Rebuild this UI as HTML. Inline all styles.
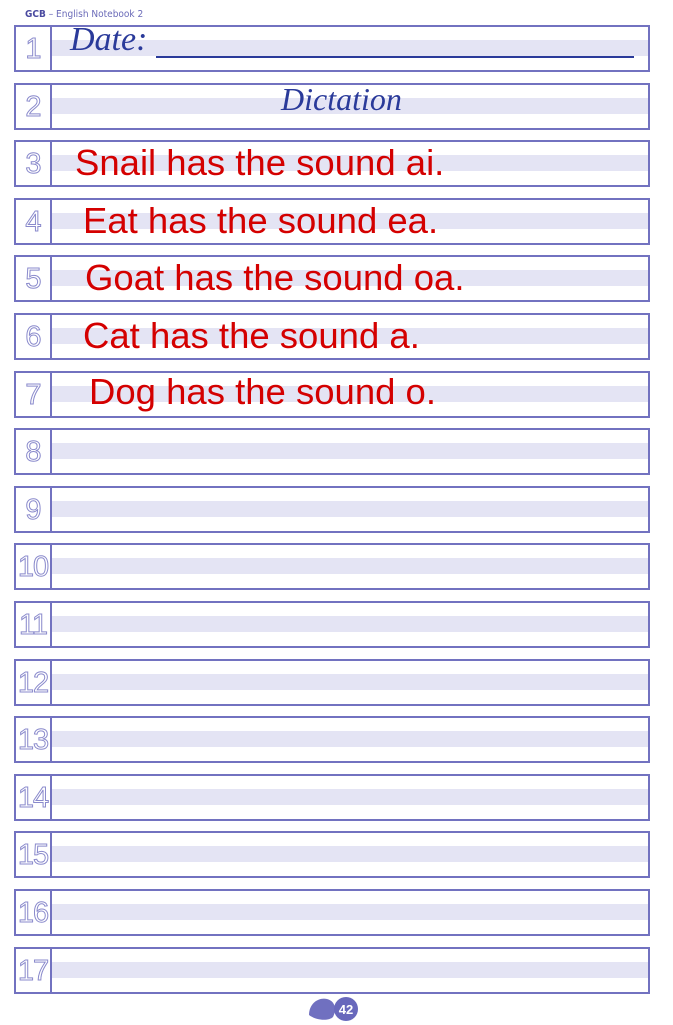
<!DOCTYPE html>
<html><head><meta charset="utf-8"><style>
body{margin:0;width:673px;height:1025px;background:#fff;position:relative;overflow:hidden;font-family:"Liberation Sans",sans-serif}
.hdr{position:absolute;left:25px;top:9px;font-size:10px;color:#6a6ab8;font-family:"DejaVu Sans Condensed","Liberation Sans",sans-serif}
.hdr b{color:#4a4aa0}
.row{position:absolute;left:14px;width:636px;height:47px;box-sizing:border-box;border:2px solid #7272c0}
.num{position:absolute;left:0;top:0;width:36px;height:43px;border-right:2px solid #7272c0;box-sizing:border-box;text-align:center;font-size:29px;line-height:45px;color:#fff;-webkit-text-stroke:1px #8a8acc;font-family:"Liberation Sans",sans-serif;letter-spacing:-1px}
.band{position:absolute;left:36px;right:0;top:13px;height:16px;background:#e4e4f4}
.t{position:absolute;top:-1px;font-size:36.5px;line-height:43px;color:#d40000;white-space:nowrap}
.s{position:absolute;font-family:"Liberation Serif",serif;font-style:italic;color:#2a3a9a;white-space:nowrap}
</style></head><body>
<div class="hdr"><b>GCB</b> – English Notebook 2</div>
<div class="row" style="top:25px"><div class="band"></div><div class="num">1</div><div class="s" style="left:54px;top:-6px;font-size:34px">Date:</div><div style="position:absolute;left:140px;right:14px;top:29px;height:2px;background:#2a3a9a"></div></div>
<div class="row" style="top:83px"><div class="band"></div><div class="num">2</div><div class="s" style="left:265px;top:-4px;font-size:32px">Dictation</div></div>
<div class="row" style="top:140px"><div class="band"></div><div class="num">3</div><div class="t" style="left:59px">Snail has the sound ai.</div></div>
<div class="row" style="top:198px"><div class="band"></div><div class="num">4</div><div class="t" style="left:67px">Eat has the sound ea.</div></div>
<div class="row" style="top:255px"><div class="band"></div><div class="num">5</div><div class="t" style="left:69px">Goat has the sound oa.</div></div>
<div class="row" style="top:313px"><div class="band"></div><div class="num">6</div><div class="t" style="left:67px">Cat has the sound a.</div></div>
<div class="row" style="top:371px"><div class="band"></div><div class="num">7</div><div class="t" style="left:73px;top:-3px">Dog has the sound o.</div></div>
<div class="row" style="top:428px"><div class="band"></div><div class="num">8</div></div>
<div class="row" style="top:486px"><div class="band"></div><div class="num">9</div></div>
<div class="row" style="top:543px"><div class="band"></div><div class="num">10</div></div>
<div class="row" style="top:601px"><div class="band"></div><div class="num">11</div></div>
<div class="row" style="top:659px"><div class="band"></div><div class="num">12</div></div>
<div class="row" style="top:716px"><div class="band"></div><div class="num">13</div></div>
<div class="row" style="top:774px"><div class="band"></div><div class="num">14</div></div>
<div class="row" style="top:831px"><div class="band"></div><div class="num">15</div></div>
<div class="row" style="top:889px"><div class="band"></div><div class="num">16</div></div>
<div class="row" style="top:947px"><div class="band"></div><div class="num">17</div></div>
<svg style="position:absolute;left:305px;top:995px" width="56" height="28">
<path d="M4 20 C4 8 14 2 22 4 C30 6 32 14 28 22 C24 26 12 26 4 20Z" fill="#7070c0"/>
<circle cx="41" cy="14" r="12" fill="#6868bc"/>
<text x="41" y="19" text-anchor="middle" font-size="13" font-weight="bold" fill="#fff" font-family="Liberation Sans">42</text>
</svg>
</body></html>
